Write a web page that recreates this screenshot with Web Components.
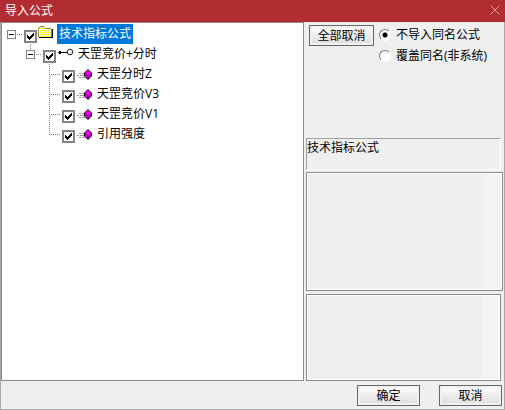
<!DOCTYPE html>
<html lang="zh-CN">
<head>
<meta charset="utf-8">
<title>导入公式</title>
<style>
  body {
    margin: 0;
    background: #efefef;
    color: #000;
    font: 12px/20px "Open Sans", "Noto Sans CJK SC", sans-serif;
  }
</style>
</head>
<body>
<import-dialog>
  <span slot="title">导入公式</span>

  <formula-tree slot="tree">
    <tree-item icon="folder" root open selected>
      技术指标公式
      <tree-item slot="children" icon="key" open last>
        天罡竞价+分时
        <tree-item slot="children" icon="formula">天罡分时Z</tree-item>
        <tree-item slot="children" icon="formula">天罡竞价V3</tree-item>
        <tree-item slot="children" icon="formula">天罡竞价V1</tree-item>
        <tree-item slot="children" icon="formula" last>引用强度</tree-item>
      </tree-item>
    </tree-item>
  </formula-tree>

  <import-options slot="side">
    <push-button slot="action">全部取消</push-button>
    <span slot="skip">不导入同名公式</span>
    <span slot="replace">覆盖同名(非系统)</span>
  </import-options>
  <status-line slot="side">技术指标公式</status-line>
  <text-pane slot="side" class="first"></text-pane>
  <text-pane slot="side" class="second"></text-pane>

  <push-button slot="footer">确定</push-button>
  <push-button slot="footer">取消</push-button>
</import-dialog>

<script>
(function () {
    function template(html) {
        let tmpl = document.createElement("template");
        tmpl.innerHTML = html;
        return tmpl;
    }

    class BaseElement extends HTMLElement {
        constructor() {
            super();
            this._shadowRoot = this.attachShadow({ mode: "open" });
            this._shadowRoot.appendChild(this.constructor.template.content.cloneNode(true));
        }
    }

    // dialog frame: title bar, tree on the left, panes on the right, buttons
    class ImportDialog extends BaseElement {}
    ImportDialog.template = template(`
      <style>
          :host {
              display: flex;
              flex-direction: column;
              min-height: 100vh;
          }
          header {
              display: flex;
              align-items: center;
              justify-content: space-between;
              height: 22px;
              padding: 0 5px;
              background: #b22d31;
              color: #fff;
          }
          header button {
              display: flex;
              padding: 0 0 2px;
              border: 0;
              background: none;
          }
          .frame {
              flex: 1;
              display: flex;
              flex-direction: column;
              border: 1px solid #a9a9a9;
              border-top: 0;
          }
          main {
              flex: 1;
              display: grid;
              grid-template-columns: 1fr 200px;
          }
          .side {
              display: flex;
              flex-direction: column;
              padding: 0 1px 0 2px;
          }
          ::slotted(status-line) {
              margin: 0 2px 2px 0;
          }
          ::slotted(.first) {
              flex: 119 1 0;
              margin-bottom: 3px;
          }
          ::slotted(.second) {
              flex: 87 1 0;
              margin-right: 2px;
          }
          footer {
              display: flex;
              justify-content: flex-end;
              gap: 19px;
              padding: 4px 2px 3px;
          }
          footer ::slotted(push-button) {
              width: 63px;
          }
      </style>
      <header>
        <slot name="title"></slot>
        <button type="button">
          <svg width="10" height="10" viewBox="0 0 10 10"><path d="M.5 .5l9 9M9.5 .5l-9 9" stroke="#dda0a2" fill="none"/></svg>
        </button>
      </header>
      <div class="frame">
        <main>
          <slot name="tree"></slot>
          <div class="side"><slot name="side"></slot></div>
        </main>
        <footer><slot name="footer"></slot></footer>
      </div>
    `);

    class FormulaTree extends BaseElement {}
    FormulaTree.template = template(`
      <style>
          :host {
              display: block;
              padding: 1px 5px;
              border: 1px solid #8a8a8a;
              background: #fff;
          }
      </style>
      <slot></slot>
    `);

    const ICONS = {
        folder: `
          <defs><pattern id="dither" width="2" height="2" patternUnits="userSpaceOnUse">
            <path fill="#ffff20" d="M0 0h2v2H0z"/><path fill="#e8e8d8" d="M0 0h1v1H0zM1 1h1v1H1z"/>
          </pattern></defs>
          <path fill="#8c8c30" d="M3 2h4v1h1v1h6v1h1v8H1V4h1V3h1z"/>
          <path fill="url(#dither)" d="M3 3h4v1h1v1h6v8H2V4h1z"/>
          <path fill="#fff" d="M2 5h12v1H3v7H2z"/>
          <path fill="#000" d="M15 5h1v9H2v-1h13z"/>`,
        key: `
          <path fill="#000" d="M3 7h2v1h6v1H5v1H3V9H2V8h1z"/>
          <circle cx="14" cy="8" r="2.8" fill="#fff" stroke="#222"/>`,
        formula: `
          <path fill="#999" d="M4 9h2v1H4zM7 9h2v1H7zM2 11h2v1H2zM5 11h4v1H5zM4 13h2v1H4zM7 13h3v1H7z"/>
          <path fill="#f0f" stroke="#000" d="M13 5.5l3.5 3.5v3L13 15.5 9.5 12V9z"/>
          <path fill="none" stroke="#400040" d="M10 9.5l3 3 3-3M13 12.5V15"/>`
    };

    class TreeItem extends BaseElement {
        connectedCallback() {
            this._shadowRoot.querySelector(".icon").innerHTML = ICONS[this.getAttribute("icon")];
            this._shadowRoot.querySelector(".toggle").addEventListener("click", this._toggle.bind(this));
            if (this.hasAttribute("open")) {
                this._shadowRoot.querySelector(".toggle").hidden = false;
            }
        }
        _toggle() {
            this.toggleAttribute("open");
        }
    }
    TreeItem.template = template(`
      <style>
          :host {
              display: block;
              --dots-down: repeating-linear-gradient(#808080 0 1px, #fff 1px 2px);
              --dots-across: repeating-linear-gradient(to right, #808080 0 1px, #fff 1px 2px);
          }
          .row {
              display: flex;
              height: 20px;
          }
          .lead {
              flex: none;
              width: 17px;
              padding-top: 6px;
              box-sizing: border-box;
              background:
                  var(--dots-across) 4px 10px / 12px 1px no-repeat,
                  var(--dots-down) 4px 0 / 1px 20px no-repeat;
          }
          :host([last]) .lead {
              background:
                  var(--dots-across) 4px 10px / 12px 1px no-repeat,
                  var(--dots-down) 4px 0 / 1px 10px no-repeat;
          }
          :host([root]) .lead {
              background: var(--dots-across) 4px 10px / 12px 1px no-repeat;
          }
          .toggle {
              display: block;
              width: 9px;
              height: 9px;
              padding: 0;
              border: 1px solid #848484;
              background:
                  linear-gradient(#000, #000) center / 5px 1px no-repeat,
                  #fff;
          }
          .toggle[hidden] {
              display: none;
          }
          :host(:not([open])) .toggle {
              background:
                  linear-gradient(#000, #000) center / 5px 1px no-repeat,
                  linear-gradient(#000, #000) center / 1px 5px no-repeat,
                  #fff;
          }
          .check {
              flex: none;
              align-self: flex-end;
              display: grid;
              margin-bottom: 1px;
          }
          .check > * {
              grid-area: 1 / 1;
          }
          .check input {
              appearance: none;
              width: 13px;
              height: 13px;
              margin: 0;
              border: 2px solid #848484;
              background: #fff;
          }
          .check svg {
              z-index: 1;
              pointer-events: none;
          }
          input:not(:checked) + svg {
              visibility: hidden;
          }
          .icon {
              flex: none;
          }
          label {
              padding: 0 2px;
              white-space: nowrap;
          }
          :host([selected]) label {
              background: #0078d7;
              color: #fff;
          }
          .children {
              padding-left: 19px;
              color: #000;
          }
          :host(:not([open])) .children {
              display: none;
          }
      </style>
      <div class="row">
        <div class="lead"><button class="toggle" type="button" hidden></button></div>
        <span class="check">
          <input type="checkbox" id="check" checked>
          <svg width="13" height="13" viewBox="0 0 13 13"><path fill="#000" d="M3 5h1v1h1v1h1V6h1V5h1V4h1V3h1v3H9v1H8v1H7v1H6v1H5V9H4V8H3z"/></svg>
        </span>
        <svg class="icon" width="20" height="20" viewBox="0 0 20 20"></svg>
        <label for="check"><slot></slot></label>
      </div>
      <div class="children"><slot name="children"></slot></div>
    `);

    class PushButton extends BaseElement {}
    PushButton.template = template(`
      <style>
          :host {
              display: block;
          }
          button {
              display: block;
              box-sizing: border-box;
              width: 100%;
              height: 21px;
              padding: 0;
              border: 1px solid #666;
              background: linear-gradient(#fff, #dcdcdc);
              box-shadow: inset 0 0 0 2px #f1f1f1;
              color: #000;
              font: inherit;
              line-height: 19px;
          }
      </style>
      <button type="button"><slot></slot></button>
    `);

    class ImportOptions extends BaseElement {}
    ImportOptions.template = template(`
      <style>
          :host {
              display: flex;
              gap: 5px;
              box-sizing: border-box;
              min-height: 116px;
              padding: 3px 0 0 3px;
          }
          ::slotted(push-button) {
              width: 65px;
          }
          .options {
              display: flex;
              flex-direction: column;
              gap: 1px;
          }
          label {
              display: flex;
              align-items: center;
              gap: 5px;
              white-space: nowrap;
          }
          input {
              appearance: none;
              box-sizing: border-box;
              width: 12px;
              height: 12px;
              margin: 0;
              border: 1px solid;
              border-color: #777 #fff #fff #777;
              border-radius: 50%;
              background: #fff;
          }
          input:checked {
              background: radial-gradient(circle, #000 2px, #fff 3px);
          }
      </style>
      <slot name="action"></slot>
      <div class="options">
        <label><input type="radio" name="mode" checked><slot name="skip"></slot></label>
        <label><input type="radio" name="mode"><slot name="replace"></slot></label>
      </div>
    `);

    class StatusLine extends BaseElement {}
    StatusLine.template = template(`
      <style>
          :host {
              display: block;
              box-sizing: border-box;
              height: 32px;
              border: 1px solid;
              border-color: #a0a0a0 #fff #fff #a0a0a0;
              line-height: 18px;
          }
      </style>
      <slot></slot>
    `);

    // read-only pane with an empty scroll bar track
    class TextPane extends BaseElement {}
    TextPane.template = template(`
      <style>
          :host {
              display: flex;
              border: 1px solid #8a8a8a;
          }
          textarea {
              flex: 1;
              min-width: 0;
              padding: 0;
              border: 1px solid #fff;
              outline: 0;
              resize: none;
              overflow: hidden;
              background: linear-gradient(to left, #f4f3f1 17px, #efefef 17px);
              font: inherit;
          }
      </style>
      <textarea readonly></textarea>
    `);

    customElements.define("import-dialog", ImportDialog);
    customElements.define("formula-tree", FormulaTree);
    customElements.define("tree-item", TreeItem);
    customElements.define("push-button", PushButton);
    customElements.define("import-options", ImportOptions);
    customElements.define("status-line", StatusLine);
    customElements.define("text-pane", TextPane);
})();
</script>
</body>
</html>
